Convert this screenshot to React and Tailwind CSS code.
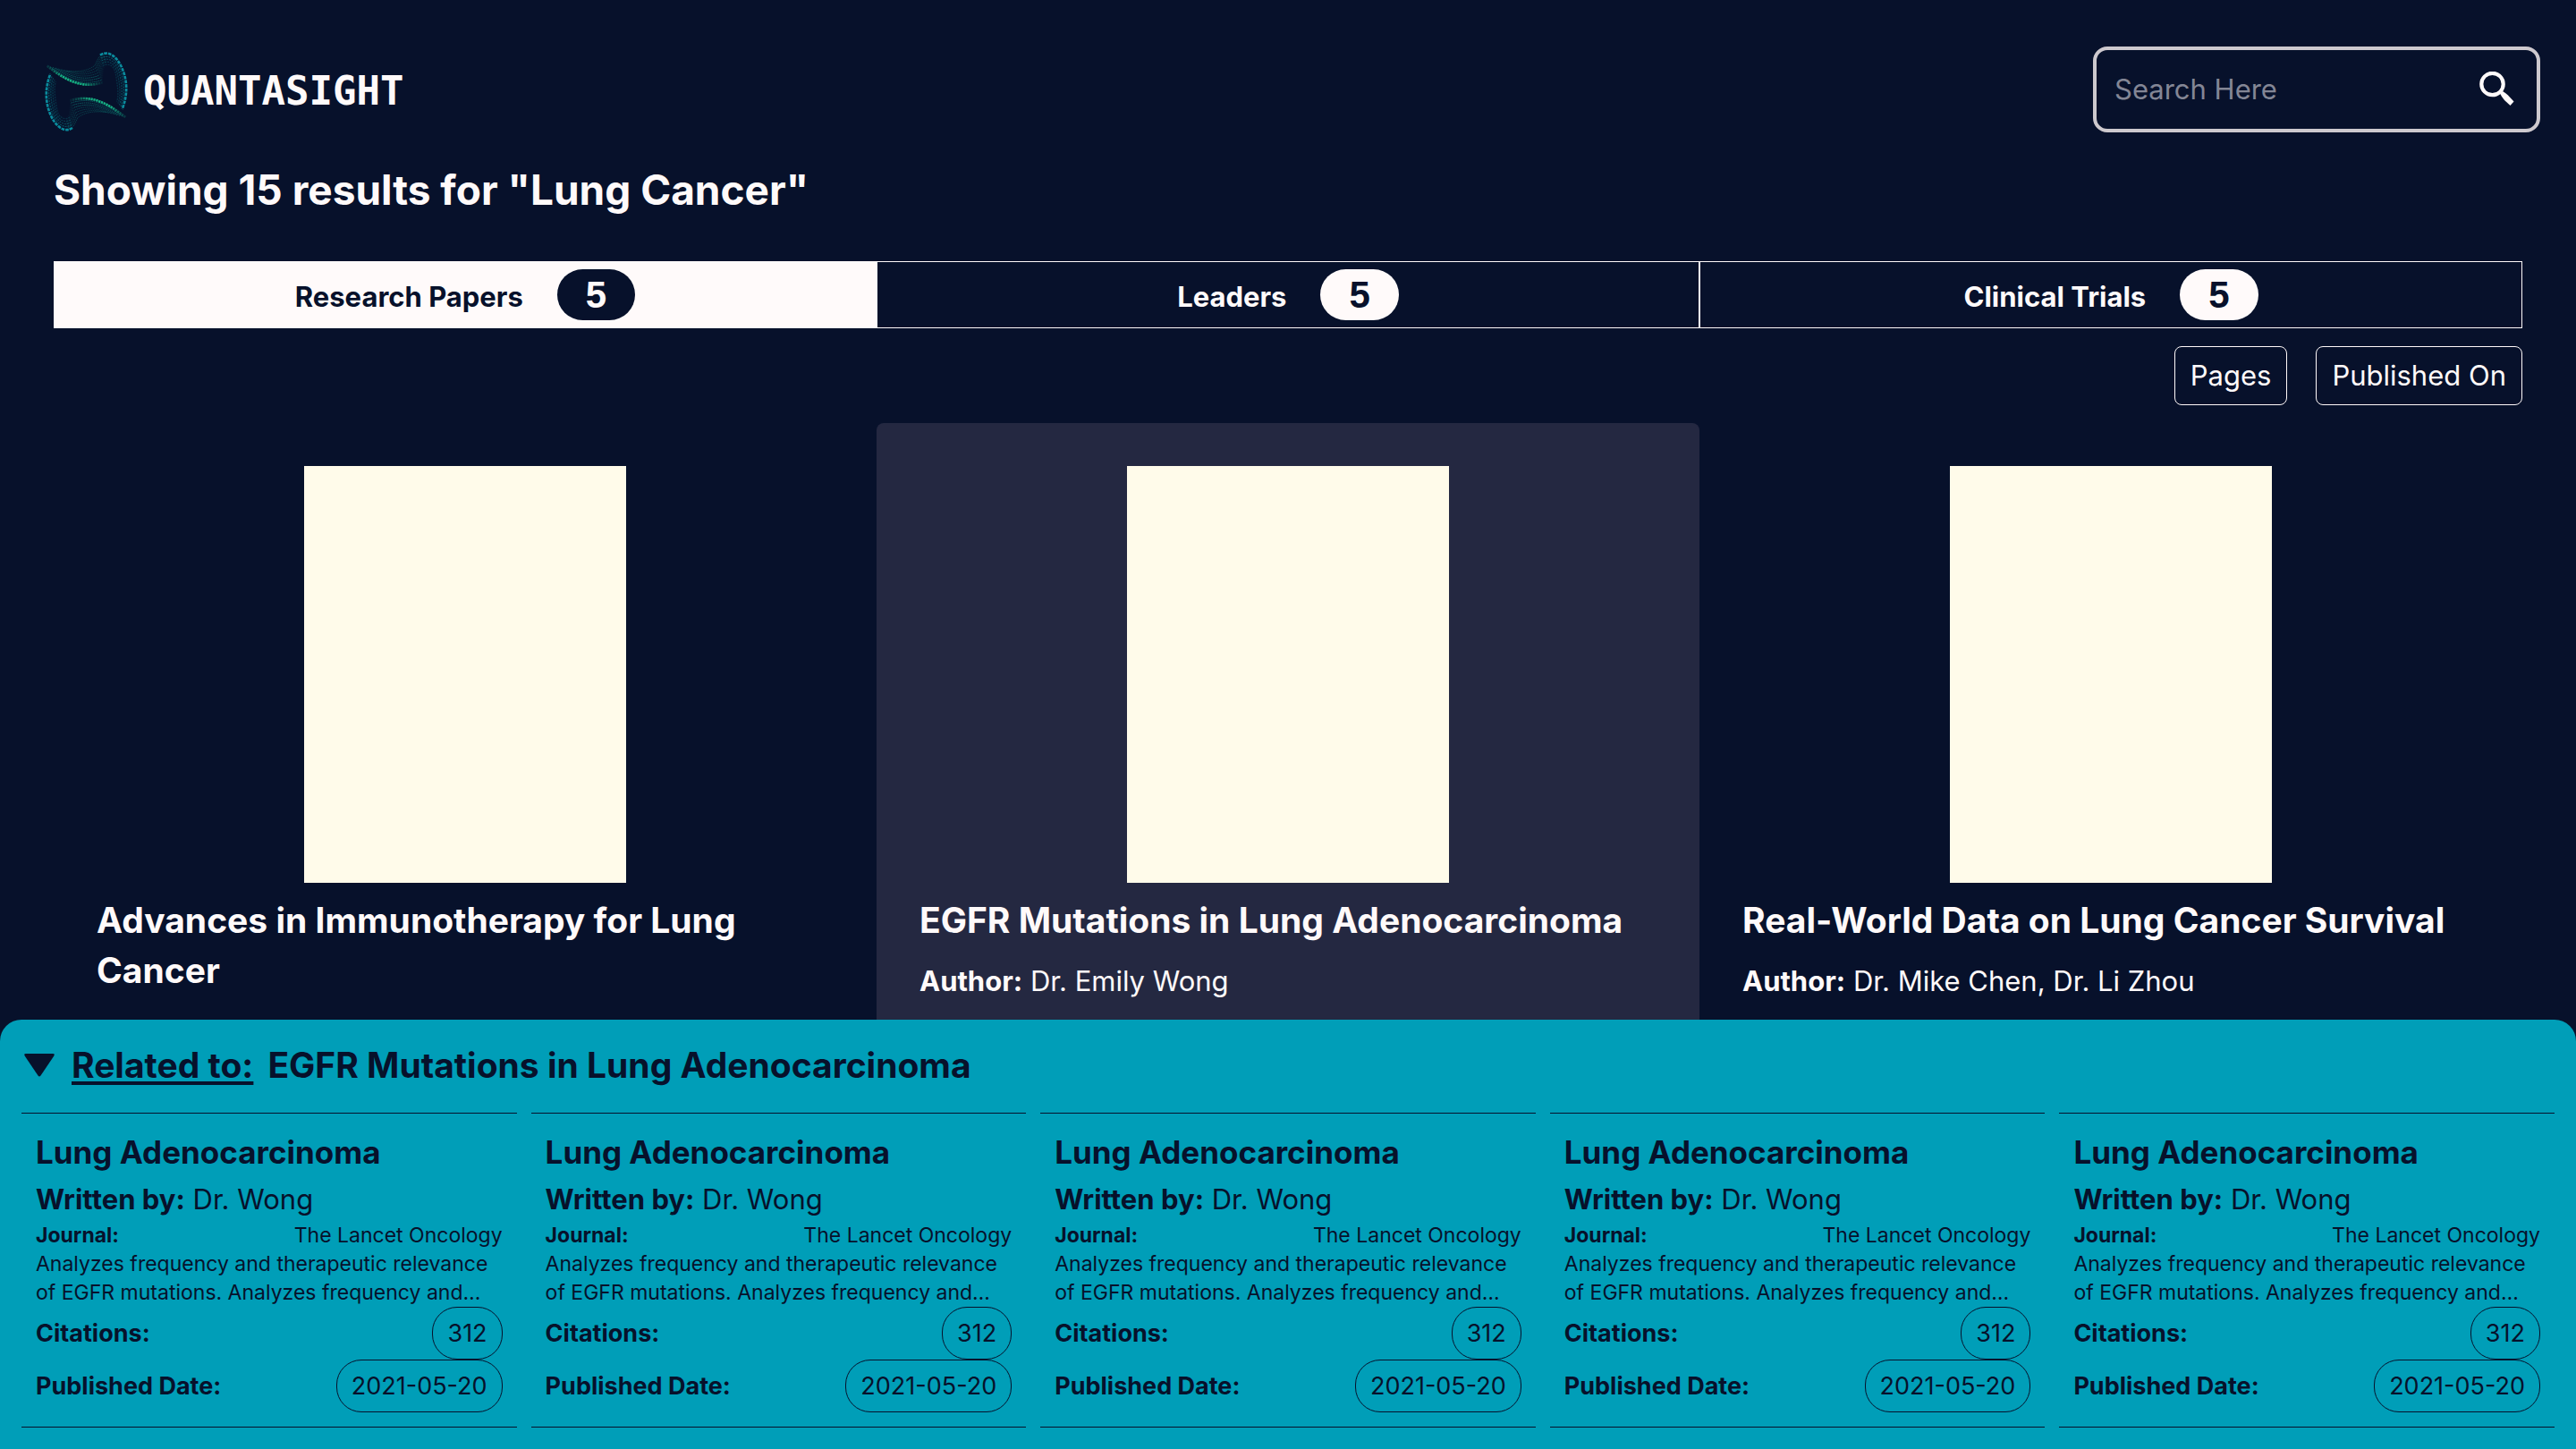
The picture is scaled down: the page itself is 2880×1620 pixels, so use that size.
import React from "react";

const tabs = [
  { name: "Research Papers", count: 5 },
  { name: "Leaders", count: 5 },
  { name: "Clinical Trials", count: 5 },
];

const papers = [
  { title: "Advances in Immunotherapy for Lung Cancer" },
  { title: "EGFR Mutations in Lung Adenocarcinoma", author: "Dr. Emily Wong" },
  { title: "Real-World Data on Lung Cancer Survival", author: "Dr. Mike Chen, Dr. Li Zhou" },
];

const related = Array.from({ length: 5 }, (_, id) => ({
  id,
  title: "Lung Adenocarcinoma",
  author: "Dr. Wong",
  journal: "The Lancet Oncology",
  lines: ["Analyzes frequency and therapeutic relevance", "of EGFR mutations. Analyzes frequency and…"],
  citations: 312,
  date: "2021-05-20",
}));

const STRANDS = [0, 1, 2, 3, 4, 5, 6, 7].map((k) => k / 7);
const ARCS = [0, 0.25, 0.45, 0.65, 0.85];

function LogoHalf() {
  return (
    <g fill="none">
      {STRANDS.map((p) => (
        <g key={p}>
          <path
            d={`M${92 - 66 * p} ${88 - 17 * p} C${125 - 45 * p} ${90 + 22 * p} ${155 - 20 * p} ${92 + 58 * p} ${186 + 26 * p} ${70 + 57 * p}`}
            stroke={p === 1 ? "url(#strand)" : "#0c8078"}
            strokeWidth={p === 1 ? 8 : 3}
            strokeDasharray={p === 1 ? "7 2" : "5 2"}
            opacity={p === 1 ? 1 : p > 0.5 ? 0.6 : 0.35}
          />
          <path
            d={`M${186 + 26 * p} ${70 + 57 * p} C${196 + 16 * p} ${50 + 50 * p} ${200 + 10 * p} ${31 + 44 * p} ${222 + 4 * p} ${30 + 38 * p}`}
            stroke="#0c8078"
            strokeWidth={3}
            strokeDasharray="5 2"
            opacity={0.4 - 0.32 * p}
          />
        </g>
      ))}
      {ARCS.map((p) => (
        <path
          key={p}
          d={`M${204 + 10 * p} ${35 + 42 * p} C${232 + 2 * p} ${16 + 50 * p} ${262 - 12 * p} ${42 + 36 * p} ${278 - 26 * p} ${80 + 20 * p} S${298 - 34 * p} ${165 + 10 * p} ${278 - 22 * p} ${216 - 30 * p}`}
          stroke={p === 0 ? "#0b98a8" : "#0a7c86"}
          strokeWidth={p === 0 ? 8 : 4}
          strokeDasharray={p === 0 ? "11 3" : "6 3"}
          opacity={p === 0 ? 0.9 : 0.7 - 0.5 * p}
        />
      ))}
    </g>
  );
}

function Logo() {
  return (
    <svg viewBox="0 0 330 315" className="h-[105px] w-[110px]" aria-hidden="true">
      <defs>
        <linearGradient id="strand" gradientUnits="userSpaceOnUse" x1="26" y1="70" x2="214" y2="130">
          <stop offset="0" stopColor="#0a7a6a" stopOpacity="0.3" />
          <stop offset="0.3" stopColor="#16b486" />
          <stop offset="0.7" stopColor="#14b082" />
          <stop offset="1" stopColor="#0a7a6a" stopOpacity="0.1" />
        </linearGradient>
      </defs>
      <LogoHalf />
      <g transform="rotate(180 157.5 157)">
        <LogoHalf />
      </g>
    </svg>
  );
}

function SearchIcon() {
  return (
    <svg viewBox="0 0 40 40" className="size-10" aria-hidden="true">
      <circle cx="14.5" cy="14" r="12.2" fill="none" stroke="#fffafa" strokeWidth="4.2" />
      <path d="M23 24.5 L26 22 Q29.5 24 32 26.5 L38.5 33.5 L34.5 38 L28 32 Q25 28.5 23 24.5Z" fill="#fffafa" />
    </svg>
  );
}

function Header() {
  return (
    <header className="flex h-24 items-center justify-between pr-10 pl-11">
      <a href="#home" className="mt-1 flex items-center gap-1.5">
        <Logo />
        <span className="font-['DejaVu_Sans_Mono',monospace] text-[44px] leading-none font-bold">QUANTASIGHT</span>
      </a>
      <form className="flex h-24 w-[500px] items-center rounded-2xl border-4 border-[#cdc9ce] pr-6 pl-5">
        <input
          type="text"
          aria-label="Search"
          placeholder="Search Here"
          className="min-w-0 flex-1 bg-transparent text-[31px] leading-11 outline-none placeholder:text-[#838695]"
        />
        <button type="button" aria-label="Submit search">
          <SearchIcon />
        </button>
      </form>
    </header>
  );
}

function Tab({ tab, active }) {
  return (
    <button
      type="button"
      className={
        "flex h-[75px] flex-1 items-center justify-center gap-[38px] border border-[#fffafa] " +
        (active ? "bg-[#fffafa] text-[#07112b]" : "")
      }
    >
      <span className="pt-1 text-[31px] leading-11 font-bold">{tab.name}</span>
      <span
        className={
          "flex h-[57px] items-center rounded-full px-8 font-['Liberation_Sans',sans-serif] text-[42px] font-bold " +
          (active ? "bg-[#07112b] text-[#fffafa]" : "bg-[#fffafa] text-[#07112b]")
        }
      >
        {tab.count}
      </span>
    </button>
  );
}

function PaperCard({ paper, active }) {
  return (
    <article className={"flex-1 rounded-t-lg px-12 pt-12 " + (active ? "bg-[#242841]" : "")}>
      <div className="mx-auto h-[466px] w-[360px] bg-[#fffbea]" />
      <h2 className="mt-3.5 text-[39px] leading-14 font-bold">{paper.title}</h2>
      {paper.author && (
        <p className="mt-[18px] text-[31px] leading-11">
          <b>Author:</b> {paper.author}
        </p>
      )}
    </article>
  );
}

function RelatedCard({ item }) {
  return (
    <article className="flex-1 border-y border-[#07112b] px-4 pt-[21px] pb-4">
      <h3 className="text-[35px] leading-11 font-bold">{item.title}</h3>
      <p className="mt-[9px] text-[31px] leading-11">
        <b>Written by:</b> {item.author}
      </p>
      <div className="mt-0.5 flex justify-between text-[23px] leading-8">
        <b>Journal:</b>
        <span>{item.journal}</span>
      </div>
      {item.lines.map((line) => (
        <p key={line} className="text-[23px] leading-8 whitespace-nowrap">
          {line}
        </p>
      ))}
      <div className="flex items-center justify-between text-[27px] leading-8">
        <b>Citations:</b>
        <span className="flex h-[59px] items-center rounded-[28px] border border-[#07112b] px-4">{item.citations}</span>
      </div>
      <div className="flex items-center justify-between text-[27px] leading-8">
        <b>Published Date:</b>
        <span className="flex h-[59px] items-center rounded-[28px] border border-[#07112b] px-4">{item.date}</span>
      </div>
    </article>
  );
}

export default function App() {
  return (
    <div className="flex h-screen flex-col overflow-hidden bg-[#07112b] pt-[52px] font-['Inter',sans-serif] text-[#fffafa]">
      <Header />
      <main className="flex min-h-0 flex-1 flex-col px-[60px] pt-[34px]">
        <h1 className="text-[46px] leading-[60px] font-bold">Showing 15 results for "Lung Cancer"</h1>
        <nav className="mt-[50px] flex">
          {tabs.map((tab, i) => (
            <Tab key={tab.name} tab={tab} active={i === 0} />
          ))}
        </nav>
        <div className="mt-5 flex justify-end gap-8 text-[31px] leading-11">
          <button type="button" className="h-[66px] rounded-lg border border-[#fffafa] px-[17px]">Pages</button>
          <button type="button" className="h-[66px] rounded-lg border border-[#fffafa] px-[17px]">Published On</button>
        </div>
        <section className="mt-5 flex min-h-0 flex-1 overflow-hidden">
          {papers.map((paper, i) => (
            <PaperCard key={paper.title} paper={paper} active={i === 1} />
          ))}
        </section>
      </main>
      <aside className="shrink-0 rounded-t-3xl bg-[#009eb8] px-6 pt-[23px] pb-6 text-[#07112b]">
        <div className="flex items-center text-[39px] leading-14 font-bold">
          <button type="button" aria-label="Collapse related papers" className="flex w-14 items-center pl-[3px]">
            <svg viewBox="0 0 34 26" className="h-[26px] w-[34px]" aria-hidden="true">
              <path d="M2 0H32Q35 0 33 3L18.5 24.5Q17 26.5 15.5 24.5L1 3Q-1 0 2 0Z" fill="#07112b" />
            </svg>
          </button>
          <h2>
            <span className="mr-4 underline decoration-4 underline-offset-4">Related to:</span>
            EGFR Mutations in Lung Adenocarcinoma
          </h2>
        </div>
        <div className="mt-[25px] flex gap-4">
          {related.map((item) => (
            <RelatedCard key={item.id} item={item} />
          ))}
        </div>
      </aside>
    </div>
  );
}
